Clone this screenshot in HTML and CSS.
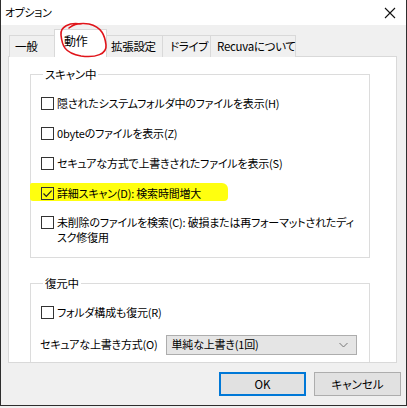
FILE: index.html
```html
<!DOCTYPE html>
<html lang="ja">
<head>
<meta charset="utf-8">
<title>オプション</title>
<link rel="stylesheet" href="styles.css">
</head>
<body>
<div class="window">
  <div class="titlebar">
    <span class="title">オプション</span>
    <svg class="close" width="12" height="12" viewBox="0 0 12 12"><path d="M1 1 L11 11 M11 1 L1 11" stroke="#111" stroke-width="1.1" fill="none"/></svg>
  </div>
  <div class="body">
    <div class="tabs">
      <div class="tab w1">一般</div>
      <div class="tab active w2">動作</div>
      <div class="tab w3">拡張設定</div>
      <div class="tab w4">ドライブ</div>
      <div class="tab w5">Recuvaについて</div>
    </div>
    <div class="panel">
      <fieldset class="group g1">
        <legend>スキャン中</legend>
        <div class="row"><span class="box"></span><span class="txt">隠されたシステムフォルダ中のファイルを表示(H)</span></div>
        <div class="row"><span class="box"></span><span class="txt">0byteのファイルを表示(Z)</span></div>
        <div class="row"><span class="box"></span><span class="txt">セキュアな方式で上書きされたファイルを表示(S)</span></div>
        <div class="row marked"><span class="hl"></span><span class="box"><svg width="11" height="11" viewBox="0 0 11 11"><path d="M1.5 5.5 L4.3 8.3 L9.6 2.6" stroke="#222" stroke-width="1.2" fill="none"/></svg></span><span class="txt">詳細スキャン(D): 検索時間増大</span></div>
        <div class="row multi"><span class="box"></span><span class="txt">未削除のファイルを検索(C): 破損または再フォーマットされたディスク修復用</span></div>
      </fieldset>
      <fieldset class="group g2">
        <legend>復元中</legend>
        <div class="row"><span class="box"></span><span class="txt">フォルダ構成も復元(R)</span></div>
        <div class="row sel-row">
          <span class="txt">セキュアな上書き方式(O)</span>
          <div class="select"><span>単純な上書き(1回)</span><svg width="9" height="6" viewBox="0 0 9 6"><path d="M0.5 1 L4.5 5 L8.5 1" stroke="#777" stroke-width="1" fill="none"/></svg></div>
        </div>
      </fieldset>
    </div>
    <div class="buttons">
      <button class="btn ok">OK</button>
      <button class="btn">キャンセル</button>
    </div>
  </div>
  <svg class="circle" width="60" height="42" viewBox="54 20 60 42"><path d="M80 24 C 68 22, 59 27, 60 35 C 61 45, 63 53, 80 56 C 95 58, 106 54, 105 45 C 104 36, 101 27, 88 24 C 81 23, 73 24, 68 28" stroke="#e0141a" stroke-width="1.6" fill="none" stroke-linecap="round"/></svg>
</div>
</body>
</html>
```

FILE: styles.css
```css
* { box-sizing: border-box; }
html, body { margin: 0; padding: 0; background: #f0f0f0; }
body {
  font-family: "Noto Sans CJK JP", "Noto Sans", sans-serif;
  font-size: 11px;
  letter-spacing: -0.2px;
  font-feature-settings: "palt" 1;
  color: #000;
}
.window {
  position: relative;
  width: 407px;
  height: 406px;
  border: 1px solid #2e2e2e;
  border-top: none;
  display: flex;
  flex-direction: column;
  background: #f0f0f0;
}
.titlebar {
  height: 25px;
  background: #fff;
  display: flex;
  align-items: center;
  justify-content: space-between;
  padding: 0 10px 1px 4px;
}
.title { font-size: 11px; letter-spacing: -0.4px; line-height: 14px; }
.close { display: block; margin-top: 1px; }
.body { flex: 1; display: flex; flex-direction: column; }
.tabs {
  height: 32px;
  display: flex;
  align-items: flex-end;
  padding-left: 9px;
  position: relative;
  z-index: 1;
}
.tab {
  height: 22px;
  border: 1px solid #d9d9d9;
  border-bottom: none;
  background: #f0f0f0;
  display: flex;
  align-items: center;
  justify-content: flex-start;
  line-height: 14px;
  margin-left: -1px;
  padding-bottom: 1px;
  font-size: 11.5px;
  letter-spacing: -0.3px;
  white-space: nowrap;
}
.tab.active {
  height: 28px;
  background: #fff;
  margin-left: -2px;
  margin-right: -1px;
  position: relative;
  z-index: 2;
  padding-bottom: 6px;
}
.w1 { width: 47px; padding-left: 5px; }
.w2 { width: 53px; padding-left: 9px; font-size: 12px; }
.w3 { width: 58px; padding-left: 5px; }
.w4 { width: 49px; padding-left: 7px; }
.w5 { width: 86px; padding-left: 6px; }
.panel {
  height: 307px;
  margin: 0 9px 0 7px;
  margin-top: -1px;
  background: #fff;
  border: 1px solid #d9d9d9;
  overflow: hidden;
  padding: 10px 0 0 21px;
}
.group {
  margin: 0;
  width: 340px;
  border: 1px solid #dcdcdc;
  padding: 7px 0 12px 10px;
  min-width: 0;
}
.group legend {
  padding: 0 2px;
  margin-left: 2px;
  line-height: 14px;
  height: 14px;
  font-size: 11.5px;
}
.g2 { margin-top: 18px; padding-top: 7px; padding-bottom: 30px; }
.row {
  height: 30px;
  display: flex;
  align-items: center;
  position: relative;
}
.row .txt { position: relative; z-index: 1; line-height: 15px; }
.box {
  width: 13px;
  height: 13px;
  border: 1px solid #333;
  margin-right: 3px;
  flex: none;
  position: relative;
  z-index: 1;
  display: flex;
  align-items: center;
  justify-content: center;
}
.box svg { display: block; }
.hl {
  position: absolute;
  left: -11px;
  top: 5px;
  width: 198px;
  height: 18px;
  background: #ffff0f;
  border-radius: 2px 6px 4px 3px;
  z-index: 0;
}
.multi {
  height: 37px;
  align-items: flex-start;
  padding-top: 7px;
}
.multi .box { margin-top: 1px; }
.multi .txt { width: 301px; }
.sel-row { height: 35px; }
.sel-row .txt { margin-left: -1px; }
.select {
  margin-left: 8px;
  width: 191px;
  height: 20px;
  background: #e5e5e5;
  border: 1px solid #adadad;
  display: flex;
  align-items: center;
  justify-content: space-between;
  padding: 0 8px 0 5px;
  line-height: 15px;
}
.select svg { display: block; }
.buttons {
  display: flex;
  justify-content: flex-end;
  gap: 8px;
  margin-top: 9px;
  padding-right: 5px;
}
.btn {
  width: 87px;
  height: 24px;
  font-family: inherit;
  font-size: 11.5px;
  font-feature-settings: "palt" 1;
  background: #e1e1e1;
  border: 1px solid #adadad;
  color: #000;
  padding: 0;
  line-height: 14px;
}
.btn.ok { border: 2px solid #0078d7; }
.circle {
  position: absolute;
  left: 54px;
  top: 20px;
  z-index: 5;
  pointer-events: none;
}
```
